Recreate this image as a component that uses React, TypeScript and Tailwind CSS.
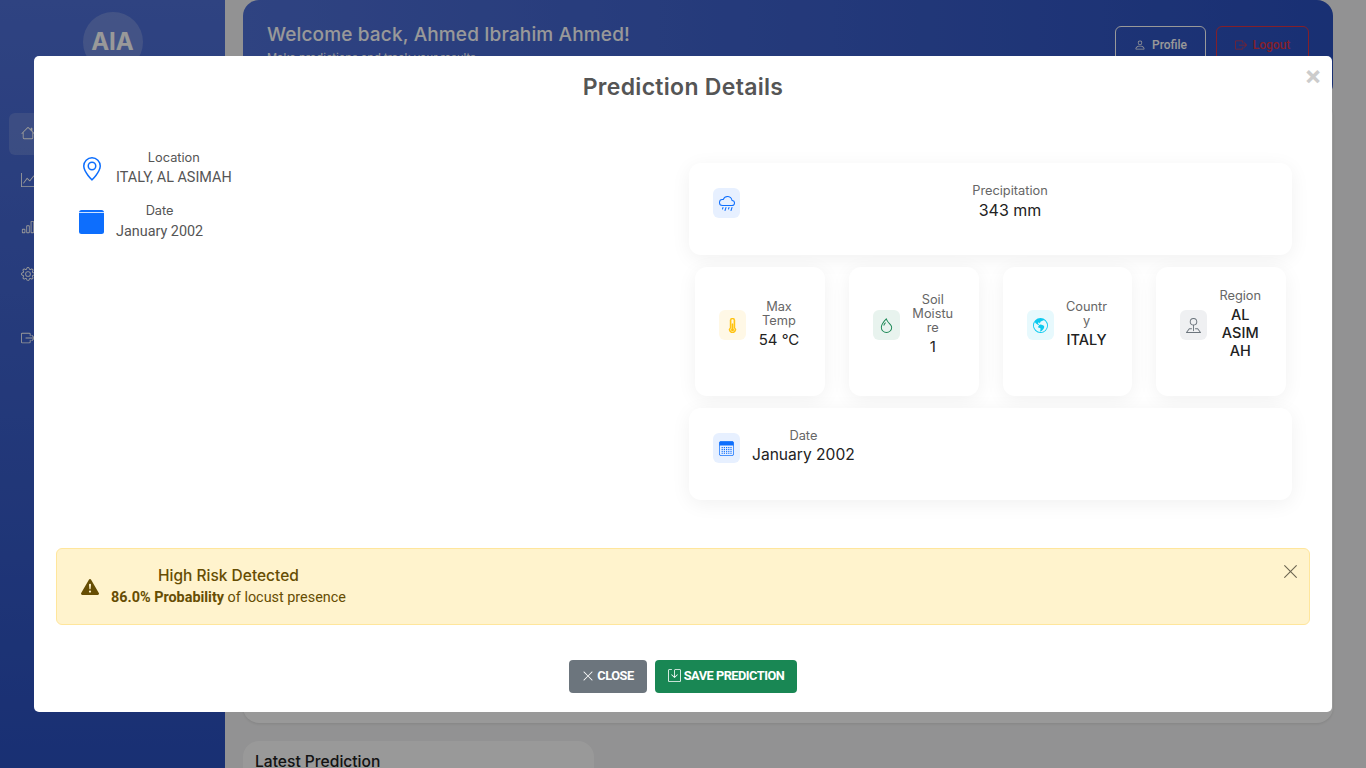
import React from "react";
import {
  BsHouse, BsGraphUp, BsBarChart, BsGear, BsBoxArrowRight, BsPerson, BsGeoAlt,
  BsCloudRain, BsThermometerHalf, BsDroplet, BsGlobeAmericas, BsPinMap,
  BsExclamationTriangleFill, BsXLg, BsSave,
} from "react-icons/bs";

const poppins = "font-['Inter','Liberation_Sans',sans-serif]";
const roboto = "font-['Roboto','Liberation_Sans',sans-serif]";

function IconBox({ bg, children }: { bg: string; children: React.ReactNode }) {
  return <div className={`flex h-[30px] w-[27px] shrink-0 items-center justify-center rounded-md ${bg}`}>{children}</div>;
}

function SmallCard({ icon, label, value, size }: { icon: React.ReactNode; label: React.ReactNode; value: React.ReactNode; size: string }) {
  return (
    <div className="h-[129px] min-w-0 flex-1 rounded-xl bg-white p-6 shadow-[0_4px_20px_rgba(0,0,0,0.06)]">
      <div className="flex h-[68px] items-center gap-[9px]">
        {icon}
        <div className="w-[48px] shrink-0 text-center">
          <div className="-mt-[2px] text-[12.8px] leading-[14px] text-[#666]">{label}</div>
          <div className={`mt-[3px] leading-[18px] text-[#222] ${size}`}>{value}</div>
        </div>
      </div>
    </div>
  );
}

function SolidCalendar() {
  return (
    <svg width="25" height="24" viewBox="0 0 25 24" className="shrink-0 text-[#0d6efd]">
      <rect width="25" height="24" rx="2.5" fill="currentColor" />
      <rect y="2" width="25" height="0.8" fill="#fff" />
    </svg>
  );
}

function GridCalendar() {
  const dots: React.ReactNode[] = [];
  for (let r = 0; r < 4; r++) {
    for (let c = 0; c < 5; c++) {
      dots.push(<rect key={`${r}-${c}`} x={2.6 + c * 2.2} y={6 + r * 1.9} width="1.2" height="1.1" fill="currentColor" />);
    }
  }
  return (
    <svg width="15" height="15" viewBox="0 0 15 15" className="text-[#0d6efd]">
      <rect x="0.4" y="0.4" width="14.2" height="14.2" rx="1.6" fill="none" stroke="currentColor" strokeWidth="0.8" />
      <path d="M0.4 2a1.6 1.6 0 0 1 1.6-1.6h11a1.6 1.6 0 0 1 1.6 1.6v2.6H0.4z" fill="currentColor" />
      {dots}
    </svg>
  );
}

export default function App() {
  return (
    <div className={`relative flex h-[768px] w-[1366px] overflow-hidden bg-[#f4f4f5] ${poppins}`}>
      <aside className="flex h-full w-[225px] shrink-0 flex-col bg-gradient-to-b from-[#4f70d8] to-[#2a50c0] pt-3">
        <div className="mx-auto flex h-[60px] w-[60px] items-center justify-center rounded-full bg-white/20 text-2xl font-bold text-white">AIA</div>
        <nav className="mt-[41px] flex flex-col px-[9px] text-[#fff]">
          <div className="flex h-[42px] items-center rounded-md bg-white/15 pb-[2px] pl-3"><BsHouse size={14} /></div>
          <div className="mt-[5px] flex h-[42px] items-center pb-[2px] pl-3"><BsGraphUp size={14} /></div>
          <div className="mt-[5px] flex h-[42px] items-center pb-[2px] pl-3"><BsBarChart size={14} /></div>
          <div className="mt-[5px] flex h-[42px] items-center pb-[2px] pl-3"><BsGear size={14} /></div>
          <div className="mt-[22px] flex h-[42px] items-center pb-[2px] pl-3"><BsBoxArrowRight size={14} /></div>
        </nav>
      </aside>
      <main className="flex-1 px-[18px] pr-[33px]">
        <header className="flex h-[100px] items-start justify-between rounded-2xl bg-gradient-to-r from-[#4f70d8] to-[#2a50c0] px-6 pt-[26px]">
          <div>
            <h1 className="text-[19px] leading-[18px] font-medium tracking-[0.15px] text-white">Welcome back, Ahmed Ibrahim Ahmed!</h1>
            <p className="mt-[6px] text-[11.2px] leading-4 text-white">Make predictions and track your results</p>
          </div>
          <div className={`flex gap-[10px] text-xs font-medium ${roboto}`}>
            <div className="flex h-[38px] w-[91px] items-center justify-center gap-[6px] rounded-md border border-white text-white"><BsPerson size={12} />Profile</div>
            <div className="flex h-[38px] w-[93px] items-center justify-center gap-[6px] rounded-md border border-[#dc3545] text-[#dc3545]"><BsBoxArrowRight size={12} />Logout</div>
          </div>
        </header>
        <section className="mt-0 h-[623px] rounded-2xl bg-white shadow-[0_1px_3px_rgba(0,0,0,0.1)]" />
        <section className="mt-[18px] h-[100px] w-[351px] rounded-2xl bg-white px-3 pt-[11px] text-[15.6px] leading-5 font-medium text-[#222]">Latest Prediction</section>
      </main>

      <div className="absolute inset-0 bg-black/40" />

      <div className="absolute top-[56px] left-[34px] flex h-[656px] w-[1298px] flex-col rounded-[5px] bg-white px-[22px]">
        <div className="absolute top-[7px] right-[10px] text-[26px] leading-[26px] font-bold text-[#ccc]">×</div>
        <h2 className="mt-[16px] text-center text-[23px] leading-[30px] font-semibold tracking-[0.3px] text-[#555]">Prediction Details</h2>

        <div className="mt-[48px] flex h-[350px]">
          <div className="w-[627px] pl-[23px]">
            <div className="flex items-center gap-[12px]">
              <BsGeoAlt size={24} className="ml-px text-[#0d6efd]" />
              <div className="text-center">
                <div className="text-[12.8px] leading-[16px] text-[#555]">Location</div>
                <div className={`mt-[3px] text-[14.4px] leading-[18px] text-[#555] ${roboto}`}>ITALY, AL ASIMAH</div>
              </div>
            </div>
            <div className="mt-[16px] flex items-center gap-[12px]">
              <SolidCalendar />
              <div className="text-center">
                <div className="text-[12.8px] leading-[16px] text-[#555]">Date</div>
                <div className={`mt-[4px] text-[14.4px] leading-[18px] text-[#555] ${roboto}`}>January 2002</div>
              </div>
            </div>
          </div>
          <div className="flex w-[603px] flex-col pt-[13px] pl-[6px]">
            <div className="h-[92px] w-[603px] rounded-xl bg-white p-6 shadow-[0_4px_20px_rgba(0,0,0,0.06)]">
              <div className="flex h-[32px] items-center gap-2">
                <IconBox bg="bg-[#e7f0ff]"><BsCloudRain size={16} className="text-[#0d6efd]" /></IconBox>
                <div className="-mt-[3px] flex-1 pl-1 text-center">
                  <div className="text-[12.8px] leading-[14px] text-[#666]">Precipitation</div>
                  <div className="mt-[3px] text-[16px] leading-[18px] text-[#222]">343 mm</div>
                </div>
              </div>
            </div>
            <div className="mt-3 ml-[6px] flex w-[591px] gap-6">
              <SmallCard size="text-[15px]" icon={<IconBox bg="bg-[#fff8e6]"><BsThermometerHalf size={15} stroke="currentColor" strokeWidth={0.6} className="text-[#ffc107]" /></IconBox>} label={<>Max<br />Temp</>} value="54 °C" />
              <SmallCard size="text-[15px]" icon={<IconBox bg="bg-[#e8f3ee]"><BsDroplet size={15} className="text-[#198754]" /></IconBox>} label={<>Soil<br />Moistu<br />re</>} value="1" />
              <SmallCard size="text-[14.5px] font-medium" icon={<IconBox bg="bg-[#e7f9fd]"><BsGlobeAmericas size={15} className="text-[#0dcaf0]" /></IconBox>} label={<>Countr<br />y</>} value="ITALY" />
              <SmallCard size="text-[14.5px] font-medium" icon={<IconBox bg="bg-[#eff0f2]"><BsPinMap size={15} className="text-[#6c757d]" /></IconBox>} label="Region" value={<>AL<br />ASIM<br />AH</>} />
            </div>
            <div className="mt-3 h-[92px] w-[603px] rounded-xl bg-white p-6 shadow-[0_4px_20px_rgba(0,0,0,0.06)]">
              <div className="flex h-[32px] items-center gap-3">
                <IconBox bg="bg-[#e7f0ff]"><GridCalendar /></IconBox>
                <div className="-mt-[3px] text-center">
                  <div className="text-[12.8px] leading-[14px] text-[#666]">Date</div>
                  <div className="mt-[3px] text-[15.6px] leading-[18px] text-[#222]">January 2002</div>
                </div>
              </div>
            </div>
          </div>
        </div>

        <div className="relative mt-[48px] flex h-[77px] items-center gap-3 rounded-md border border-[#ffe69c] bg-[#fff3cd] pl-6 text-[#664d03]">
          <BsExclamationTriangleFill size={18} />
          <div>
            <div className="text-center text-[15.5px] leading-[20px] font-medium">High Risk Detected</div>
            <div className={`mt-[2px] text-[14.4px] leading-[20px] ${roboto}`}><b>86.0% Probability</b> of locust presence</div>
          </div>
          <BsXLg size={17} className="absolute top-[14px] right-[10px] text-[#6b6450]" />
        </div>

        <div className={`mt-[35px] flex justify-center gap-2 text-[12.8px] font-bold tracking-[-0.5px] text-white ${roboto}`}>
          <button className="flex h-[33px] w-[78px] items-center justify-center gap-[3px] rounded bg-[#6c757d] pb-[2px]"><BsXLg size={12} />CLOSE</button>
          <button className="flex h-[33px] w-[142px] items-center justify-center gap-[3px] rounded bg-[#198754] pb-[2px]"><BsSave size={13} />SAVE PREDICTION</button>
        </div>
      </div>
    </div>
  );
}
